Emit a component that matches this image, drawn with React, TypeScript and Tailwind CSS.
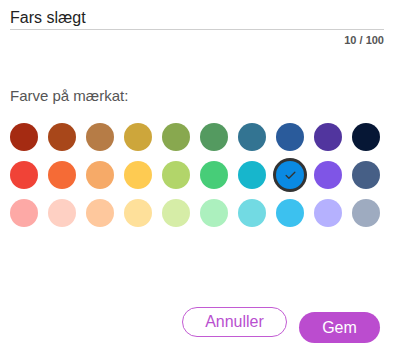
import { Check } from "lucide-react";

const colors = [
  ["#a52b12", "#a8471a", "#b67c46", "#cda63b", "#88a84f", "#549a60", "#337492", "#2a5b9b", "#51359e", "#061735"],
  ["#f04337", "#f56b36", "#f6aa68", "#fecb52", "#b2d56a", "#47cd78", "#17b6cc", "#0a8ae3", "#7f55e6", "#465f86"],
  ["#fda9a6", "#fed0c3", "#fec89d", "#fee09a", "#d6eda7", "#acf0be", "#72dae3", "#3cc1ef", "#b5b1fe", "#9eabc0"],
];

export default function App() {
  const selected = "#0a8ae3";
  return (
    <div className="w-[394px] h-[350px] bg-white px-[10px] font-['Liberation_Sans',Arial,sans-serif] flex flex-col">
      <div className="pt-[7px] text-[16px] leading-[22px] text-[#222] h-[30px] border-b border-[#cfcfcf]">Fars slægt</div>
      <div className="mt-[4px] text-right text-[11px] font-bold leading-[13px] text-[#555]">10 / 100</div>
      <div className="mt-[40px] text-[15px] leading-[18px] text-[#555]">Farve på mærkat:</div>
      <div className="mt-[18px] flex flex-col gap-[10px]">
        {colors.map((row, i) => (
          <div key={i} className="flex gap-[10px]">
            {row.map((c) => (
              <div
                key={c}
                className={`w-[28px] h-[28px] rounded-full flex items-center justify-center ${c === selected ? "ring-3 ring-[#333]" : ""}`}
                style={{ backgroundColor: c }}
              >
                {c === selected && <Check size={13} strokeWidth={2.5} color="#333" />}
              </div>
            ))}
          </div>
        ))}
      </div>
      <div className="mt-auto mb-[7px] flex justify-end items-end gap-[12px] pr-[4px]">
        <button className="mb-[6px] w-[105px] h-[30px] rounded-full border border-[#c25bd3] text-[#b94fcf] text-[16px]">Annuller</button>
        <button className="w-[81px] h-[31px] rounded-full bg-[#bb4ccf] text-white text-[16px]">Gem</button>
      </div>
    </div>
  );
}
